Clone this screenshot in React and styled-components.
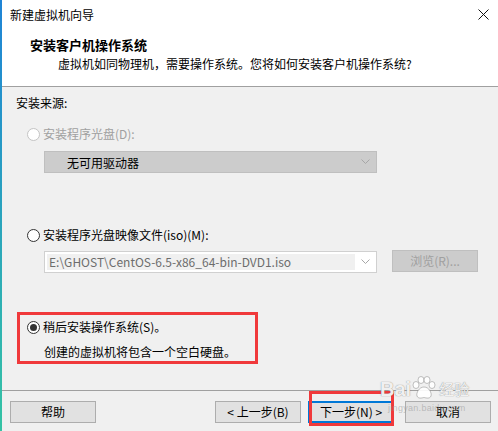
import styled, { createGlobalStyle } from "styled-components";

const GlobalStyle = createGlobalStyle`
  html, body {
    margin: 0;
    padding: 0;
  }
  body {
    background: #f0f0f0;
    font-family: "Microsoft YaHei", "Noto Sans CJK SC", sans-serif;
    font-size: 12px;
    color: #000;
  }
`;

const Window = styled.div`
  position: relative;
  width: 498px;
  height: 431px;
  box-sizing: border-box;
  display: flex;
  flex-direction: column;
  border-left: 2px solid;
  border-image: linear-gradient(#1f84d6, #35c3a4) 1;
  overflow: hidden;
`;

const Header = styled.header`
  height: 86px;
  background: #fff;
  border-bottom: 1px solid #a0a0a0;
  padding: 0 9px 0 8px;
  display: flex;
  flex-direction: column;
`;

const TitleBar = styled.div`
  height: 29px;
  display: flex;
  align-items: center;
  justify-content: space-between;
  line-height: 16px;
`;

const Heading = styled.h1`
  margin: 7px 0 0 20px;
  font-size: 13px;
  font-weight: bold;
  line-height: 18px;
`;

const Subtitle = styled.p`
  margin: 2px 0 0 48px;
  line-height: 16px;
`;

const Body = styled.main`
  flex: 1;
  padding: 8px 0 0 14px;
  display: flex;
  flex-direction: column;
  align-items: flex-start;
`;

const SourceLabel = styled.div`
  line-height: 16px;
`;

const Option = styled.label`
  display: flex;
  align-items: center;
  gap: 3px;
  line-height: 16px;
  margin: ${(p) => p.$top || 0}px 0 0 ${(p) => p.$left ?? 11}px;
  color: ${(p) => (p.$disabled ? "#a0a0a0" : "#000")};
`;

const Radio = styled.span`
  width: 13px;
  height: 13px;
  box-sizing: border-box;
  border-radius: 50%;
  background: #fff;
  border: 1px solid ${(p) => (p.$disabled ? "#c4c4c4" : "#333")};
  display: flex;
  align-items: center;
  justify-content: center;

  &::after {
    content: "";
    display: ${(p) => (p.$checked ? "block" : "none")};
    width: 7px;
    height: 7px;
    border-radius: 50%;
    background: #333;
  }
`;

const Select = styled.div`
  margin: 9px 0 0 28px;
  width: 333px;
  height: 22px;
  box-sizing: border-box;
  background: #cccccc;
  border: 1px solid #bfbfbf;
  display: flex;
  align-items: center;
  justify-content: space-between;
  padding: 0 6px 0 22px;
`;

const ComboRow = styled.div`
  margin: 7px 0 0 28px;
  display: flex;
  align-items: flex-start;
  gap: 15px;
`;

const Combo = styled.div`
  margin-top: 1px;
  width: 333px;
  height: 22px;
  box-sizing: border-box;
  background: #fff;
  border: 1px solid #d0d0d0;
  display: flex;
  align-items: center;
  padding: 0 6px 0 2px;
  gap: 6px;
`;

const ComboField = styled.div`
  flex: 1;
  height: 16px;
  background: #f0f0f0;
  color: #6d6d6d;
  line-height: 16px;
  padding-left: 2px;
  white-space: nowrap;
  overflow: hidden;
`;

const Chevron = () => (
  <svg width="9" height="6" viewBox="0 0 9 6">
    <path d="M0.5 0.5 L4.5 4.5 L8.5 0.5" fill="none" stroke="#a6a6a6" strokeWidth="1" />
  </svg>
);

const Highlight = styled.div`
  margin: 39px 0 0 1px;
  width: 241px;
  height: 52px;
  box-sizing: border-box;
  border: 3px solid #f0393b;
  padding: 4px 0 0 7px;
  display: flex;
  flex-direction: column;
`;

const Description = styled.div`
  margin: 9px 0 0 17px;
  line-height: 16px;
`;

const Footer = styled.footer`
  height: 41px;
  box-sizing: border-box;
  border-top: 1px solid #a0a0a0;
  padding: 10px 7px 0 8px;
  display: flex;
  align-items: flex-start;
`;

const Button = styled.button`
  position: relative;
  width: 86px;
  height: 22px;
  box-sizing: border-box;
  margin-left: ${(p) => p.$gap || 0}px;
  background: ${(p) => (p.$disabled ? "#cccccc" : "#e1e1e1")};
  border: ${(p) => (p.$default ? "2px solid #0078d7" : "1px solid #adadad")};
  border-color: ${(p) => (p.$disabled ? "#bfbfbf" : p.$default ? "#0078d7" : "#adadad")};
  color: ${(p) => (p.$disabled ? "#a0a0a0" : "#000")};
  font-family: inherit;
  font-size: 12px;
  line-height: 16px;
  padding: 0;

  &::after {
    content: "";
    display: ${(p) => (p.$marked ? "block" : "none")};
    position: absolute;
    left: -1px;
    right: -2px;
    top: -12px;
    bottom: -5px;
    border: 3px solid #f0393b;
    pointer-events: none;
  }
`;

const Spacer = styled.div`
  flex: 1;
`;

const Watermark = styled.div`
  position: absolute;
  left: 378px;
  top: 376px;
  pointer-events: none;
  color: rgba(255, 255, 255, 0.9);
  font-family: "Liberation Sans", Arial, sans-serif;
`;

const MarkTop = styled.div`
  display: flex;
  align-items: flex-end;
  font-size: 20px;
  font-weight: bold;
  line-height: 22px;
  text-shadow: 0 0 1px rgba(110, 110, 110, 0.55), 0 0 1px rgba(110, 110, 110, 0.55);
`;

const MarkCn = styled.span`
  font-family: "Noto Sans CJK SC", sans-serif;
  font-size: 15px;
  font-weight: normal;
  margin-left: 2px;
`;

const MarkUrl = styled.div`
  margin: 3px 0 0 8px;
  font-size: 9px;
  color: rgba(150, 150, 150, 0.55);
  letter-spacing: 0.3px;
`;

const Paw = () => (
  <svg width="26" height="24" viewBox="0 0 26 24">
    <g fill="rgba(255,255,255,0.9)" stroke="rgba(120,120,120,0.45)" strokeWidth="1">
      <ellipse cx="5" cy="9" rx="3" ry="3.5" />
      <ellipse cx="10" cy="4" rx="3" ry="3.5" />
      <ellipse cx="16" cy="4" rx="3" ry="3.5" />
      <ellipse cx="21" cy="9" rx="3" ry="3.5" />
      <path d="M13 11 C8 11 5 17 6 20 C7 23 11 22 13 21.5 C15 22 19 23 20 20 C21 17 18 11 13 11 Z" />
    </g>
  </svg>
);

const CloseIcon = () => (
  <svg width="11" height="11" viewBox="0 0 11 11">
    <path d="M0.5 0.5 L10.5 10.5 M10.5 0.5 L0.5 10.5" stroke="#111" strokeWidth="1" />
  </svg>
);

export default function App() {
  return (
    <>
      <GlobalStyle />
      <Window>
        <Header>
          <TitleBar>
            <span>新建虚拟机向导</span>
            <CloseIcon />
          </TitleBar>
          <Heading>安装客户机操作系统</Heading>
          <Subtitle>虚拟机如同物理机，需要操作系统。您将如何安装客户机操作系统?</Subtitle>
        </Header>

        <Body>
          <SourceLabel>安装来源:</SourceLabel>

          <Option $top={15} $disabled>
            <Radio $disabled />
            安装程序光盘(D):
          </Option>
          <Select>
            <span>无可用驱动器</span>
            <Chevron />
          </Select>

          <Option $top={54}>
            <Radio />
            安装程序光盘映像文件(iso)(M):
          </Option>
          <ComboRow>
            <Combo>
              <ComboField>E:\GHOST\CentOS-6.5-x86_64-bin-DVD1.iso</ComboField>
              <Chevron />
            </Combo>
            <Button $disabled>浏览(R)...</Button>
          </ComboRow>

          <Highlight>
            <Option $left={0}>
              <Radio $checked />
              稍后安装操作系统(S)。
            </Option>
            <Description>创建的虚拟机将包含一个空白硬盘。</Description>
          </Highlight>
        </Body>

        <Footer>
          <Button>帮助</Button>
          <Spacer />
          <Button>&lt; 上一步(B)</Button>
          <Button $gap={7} $default $marked>下一步(N) &gt;</Button>
          <Button $gap={11}>取消</Button>
        </Footer>

        <Watermark>
          <MarkTop>
            Bai
            <Paw />
            <MarkCn>经验</MarkCn>
          </MarkTop>
          <MarkUrl>jingyan.baidu.com</MarkUrl>
        </Watermark>
      </Window>
    </>
  );
}
